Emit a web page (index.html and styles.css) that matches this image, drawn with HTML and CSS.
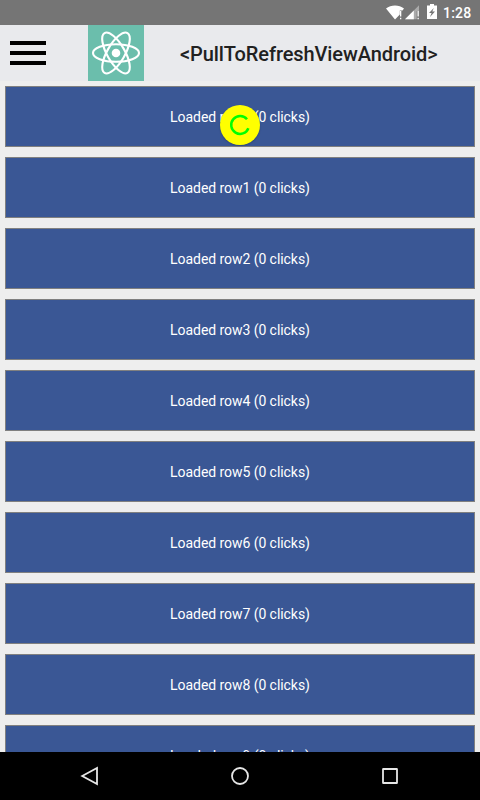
FILE: index.html
```html
<!DOCTYPE html>
<html lang="en">
<head>
<meta charset="utf-8">
<title>PullToRefreshViewAndroid</title>
<link rel="stylesheet" href="styles.css">
</head>
<body>
<div class="screen">
  <div class="status">
    <svg class="status-icons" width="56" height="25" viewBox="0 0 56 25">
      <path d="M1 8.6C6 4.6 14 4.6 19 8.6L17.5 10.5H14.8V14.5L10 19.5Z" fill="#fff"/>
      <path d="M15 11h1.3v5.5h-1.3zM15 17.7h1.3v1.5h-1.3z" fill="#fff"/>
      <path d="M20 19.3L34 5.3V11H31.7V19.3Z" fill="#aaa"/>
      <path d="M20 19.3L28.8 10.5V19.3Z" fill="#fff"/>
      <path d="M32.5 11h1.3v5.5h-1.3zM32.5 17.7h1.3v1.5h-1.3z" fill="#fff"/>
      <path d="M42 5.6H45V4H49V5.6H52V19H42Z" fill="#fff"/>
      <path d="M48.8 8L44 13H46.6L45 17L50 11.6H47.3Z" fill="#757575"/>
    </svg>
    <span class="clock">1:28</span>
  </div>
  <header class="toolbar">
    <div class="menu"><i></i><i></i><i></i></div>
    <svg class="logo" width="56" height="56" viewBox="0 0 56 56">
      <rect width="56" height="56" fill="#6bbeac"/>
      <g fill="none" stroke="#fff" stroke-width="2.1">
        <ellipse cx="28" cy="28" rx="23" ry="8.8"/>
        <ellipse cx="28" cy="28" rx="23" ry="8.8" transform="rotate(60 28 28)"/>
        <ellipse cx="28" cy="28" rx="23" ry="8.8" transform="rotate(120 28 28)"/>
      </g>
      <circle cx="28" cy="28" r="4.3" fill="#fff"/>
    </svg>
    <h1 class="title">&lt;PullToRefreshViewAndroid&gt;</h1>
  </header>
  <main class="list">
    <div class="row">Loaded row0 (0 clicks)</div>
    <div class="row">Loaded row1 (0 clicks)</div>
    <div class="row">Loaded row2 (0 clicks)</div>
    <div class="row">Loaded row3 (0 clicks)</div>
    <div class="row">Loaded row4 (0 clicks)</div>
    <div class="row">Loaded row5 (0 clicks)</div>
    <div class="row">Loaded row6 (0 clicks)</div>
    <div class="row">Loaded row7 (0 clicks)</div>
    <div class="row">Loaded row8 (0 clicks)</div>
    <div class="row">Loaded row9 (0 clicks)</div>
    <div class="spinner">
      <svg width="40" height="40" viewBox="0 0 40 40">
        <path d="M27 14.3A8.9 8.9 0 1 0 28.4 23.2" fill="none" stroke="#0f0" stroke-width="2.5"/>
      </svg>
    </div>
  </main>
  <nav class="nav">
    <svg width="24" height="24" viewBox="0 0 24 24"><path d="M4.2 12L19 3.9V20.1Z"/></svg>
    <svg width="24" height="24" viewBox="0 0 24 24"><circle cx="12" cy="12" r="8"/></svg>
    <svg width="24" height="24" viewBox="0 0 24 24"><rect x="5" y="5" width="14" height="14" rx=".3"/></svg>
  </nav>
</div>
</body>
</html>
```

FILE: styles.css
```css
body {
  margin: 0;
  font-family: Roboto, sans-serif;
}

.screen {
  width: 480px;
  height: 800px;
  display: flex;
  flex-direction: column;
  overflow: hidden;
  background: #eee;
}

.status {
  flex: none;
  height: 25px;
  display: flex;
  align-items: center;
  background: #757575;
  color: #fff;
}

.status-icons {
  margin-left: 385px;
  margin-right: 2px;
}

.clock {
  padding-top: 1px;
  font-size: 14px;
  font-weight: 500;
  line-height: 24px;
  letter-spacing: .2px;
}

.toolbar {
  flex: none;
  height: 56px;
  display: flex;
  align-items: center;
  background: #e9eaed;
}

.menu {
  width: 36px;
  margin: 0 42px 0 10px;
  display: flex;
  flex-direction: column;
  gap: 6px;
}

.menu i {
  height: 4px;
  background: #000;
}

.title {
  margin: 2px 0 0 36px;
  font-size: 20px;
  font-weight: 500;
  line-height: 24px;
  letter-spacing: -.09px;
  color: #212121;
}

.list {
  flex: 1;
  min-height: 0;
  position: relative;
  overflow: hidden;
  padding: 5px;
}

.row {
  box-sizing: border-box;
  height: 61px;
  margin-bottom: 10px;
  border: 1px solid #808080;
  background: #3a5795;
  color: #fff;
  font-size: 14px;
  line-height: 61px;
  letter-spacing: -.06px;
  text-align: center;
}

.spinner {
  position: absolute;
  top: 24px;
  left: 220px;
  width: 40px;
  height: 40px;
  border-radius: 50%;
  background: #ff0;
  box-shadow: 0 1px 2px rgba(0, 0, 0, .2);
}

.nav {
  flex: none;
  height: 48px;
  display: flex;
  align-items: center;
  justify-content: center;
  gap: 126px;
  background: #000;
}

.nav svg {
  fill: none;
  stroke: #e6e6e6;
  stroke-width: 1.8;
}
```
